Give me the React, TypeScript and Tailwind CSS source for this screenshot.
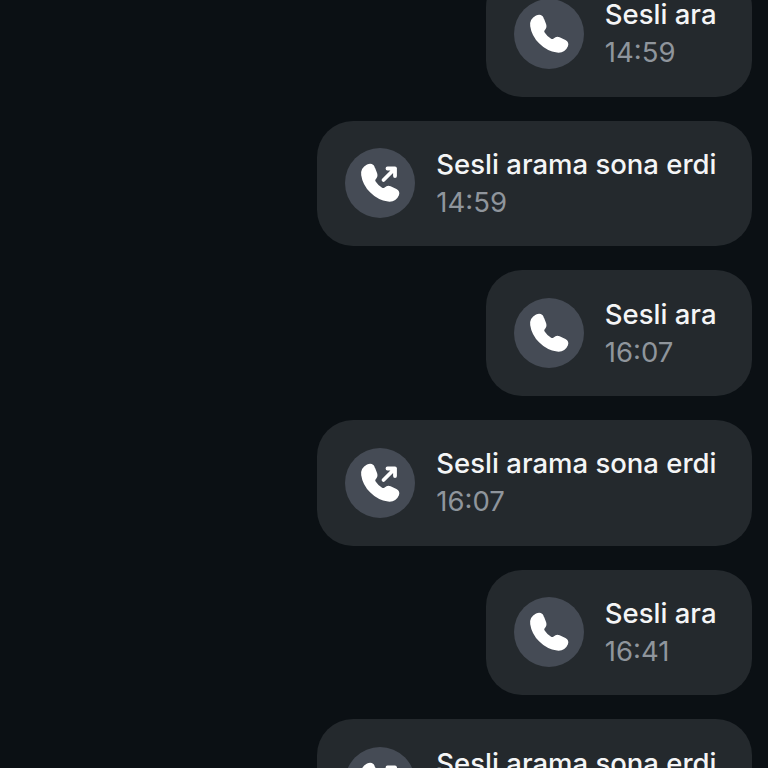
const handset =
  'M22.5 17.5C25.5 16 28 17 29 19.8L31.2 25.5C32 27.8 31.2 29.3 29.8 30.8C29 31.7 29 32.8 29.8 34C31.6 36.8 33.6 38.8 36.6 40.6C38 41.4 39.3 41.2 40.3 40.2C41.8 38.8 43.2 38.3 45.2 39.1L51 41.8C53.2 42.9 53.8 44.8 52.9 47.2C51.3 51 47.8 53 43.2 52.6C29.6 50.8 19 39 17.2 27C16.7 22.8 18.5 19.5 22.5 17.5Z'

const CallIcon = ({ ended }: { ended: boolean }) => (
  <div className="h-[70px] w-[70px] shrink-0 rounded-full bg-[#454b55]">
    <svg viewBox="0 0 70 70" className="h-[70px] w-[70px]">
      <path d={handset} fill="#fff" stroke="#fff" strokeWidth="2" strokeLinejoin="round" />
      {ended && (
        <path
          d="M38.5 32L50 20.5M42.5 20.5H50V28"
          fill="none"
          stroke="#fff"
          strokeWidth="3.8"
          strokeLinecap="round"
          strokeLinejoin="round"
        />
      )}
    </svg>
  </div>
)

const CallBubble = ({ title, time, ended }: { title: string; time: string; ended: boolean }) => (
  <div className="flex h-[125.67px] items-center gap-[21px] self-end rounded-[36px] bg-[#24292d] pl-[28px] pr-[35.5px]">
    <CallIcon ended={ended} />
    <div className="flex flex-col">
      <span className="whitespace-nowrap text-[27.5px] leading-[37px] font-medium text-[#f4f5f6]">{title}</span>
      <span className="mt-px text-[27.5px] leading-[37px] text-[#8f959c]">{time}</span>
    </div>
  </div>
)

const calls = [
  { title: 'Sesli ara', time: '14:59', ended: false },
  { title: 'Sesli arama sona erdi', time: '14:59', ended: true },
  { title: 'Sesli ara', time: '16:07', ended: false },
  { title: 'Sesli arama sona erdi', time: '16:07', ended: true },
  { title: 'Sesli ara', time: '16:41', ended: false },
  { title: 'Sesli arama sona erdi', time: '16:41', ended: true },
]

export default function App() {
  return (
    <main className="h-[768px] overflow-hidden bg-[#0b1014] font-['Inter',sans-serif]">
      <div className="mt-[-29px] flex flex-col gap-[24px] pr-[16px]">
        {calls.map((call, i) => (
          <CallBubble key={i} {...call} />
        ))}
      </div>
    </main>
  )
}
